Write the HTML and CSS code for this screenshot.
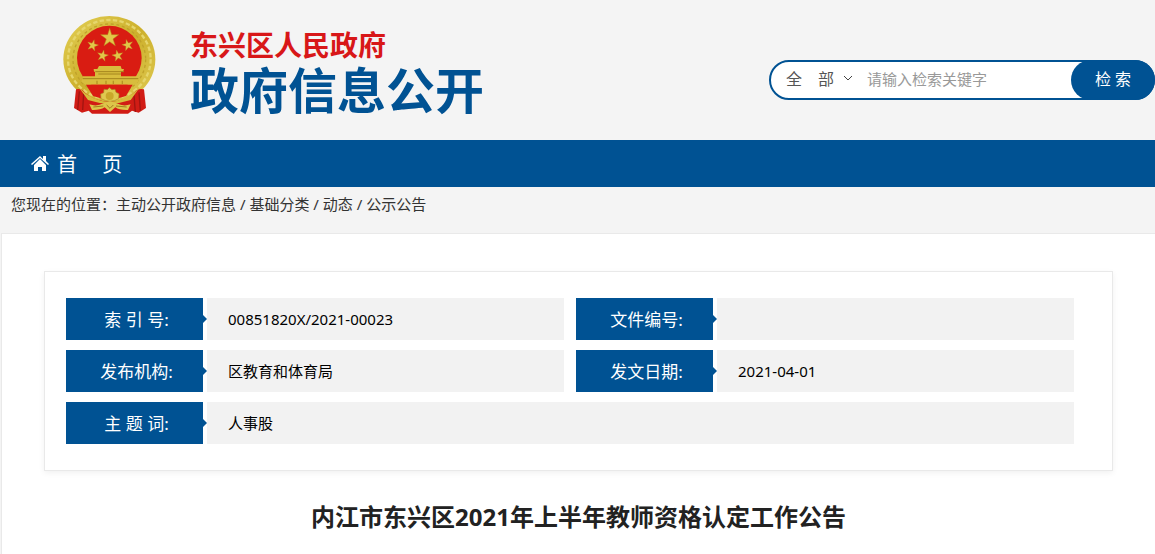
FILE: index.html
```html
<!DOCTYPE html>
<html lang="zh-CN">
<head>
  <meta charset="UTF-8" />
  <meta name="viewport" content="width=device-width, initial-scale=1.0"/>
  <title>内江市东兴区2021年上半年教师资格认定工作公告</title>
  <link rel="stylesheet" href="styles.css">
</head>
<body>

  <header class="header">
    <a class="logo" href="#">
      <svg class="emblem" viewBox="36 24 288 309" aria-hidden="true">
        <defs>
          <linearGradient id="gold" x1="0" y1="0" x2="1" y2="1">
            <stop offset="0" stop-color="#e3d056"/>
            <stop offset="0.5" stop-color="#cdb02c"/>
            <stop offset="1" stop-color="#dfca52"/>
          </linearGradient>
          <path id="star" d="M0-28 6-9 27-9 10 4 17 24 0 12-17 24-10 4-27-9-6-9z"/>
        </defs>
        <!-- wheat ring -->
        <ellipse cx="178" cy="160" rx="138" ry="130" fill="url(#gold)"/>
        <ellipse cx="178" cy="160" rx="124" ry="118" fill="none" stroke="#e6d66c" stroke-width="7" stroke-dasharray="13 7"/>
        <ellipse cx="178" cy="160" rx="109" ry="106" fill="none" stroke="#c0a22a" stroke-width="4" stroke-dasharray="9 8"/>
        <circle cx="178" cy="156" r="97" fill="#d91c12"/>
        <!-- stars -->
        <g fill="#e2c648" stroke="#b78a1b" stroke-width="1.5">
          <use href="#star" transform="translate(179 95)"/>
          <use href="#star" transform="translate(128 118) rotate(15) scale(.62)"/>
          <use href="#star" transform="translate(233 117) rotate(-15) scale(.62)"/>
          <use href="#star" transform="translate(158 149) rotate(12) scale(.62)"/>
          <use href="#star" transform="translate(203 149) rotate(-12) scale(.62)"/>
        </g>
        <!-- gate -->
        <path d="M147 180h65l3 9h7l-3 8h-6v14h50l3 16-14 9H106l-12-9 5-16h36v-14h-3l-1-8h11z" fill="#d8bd3d"/>
        <path d="M136 197h86M98 218h167M145 204h68" stroke="#a4841d" stroke-width="3" fill="none"/>
        <path d="M141 224v10M168 224v10M190 224v10M217 224v10" stroke="#b59424" stroke-width="4"/>
        <!-- ribbons and gear -->
        <path d="M108 236h140l-20 34-50 14-49-14z" fill="#d91c12"/>
        <path d="M78 250q17-4 27 10 28 26 75 27 47-1 72-27 10-14 30-10l6 56-22 14-20-6-12 9H126l-10-9-20 6-24-14z" fill="#d11c15"/>
        <path d="M88 256l-5 56M101 262l-3 50M267 259l4 55M252 268l4 50" stroke="#a11511" stroke-width="4" fill="none"/>
        <path d="M88 246q36 38 90 42 54-4 90-42l-26 36q-64 22-128 0z" fill="#d7bd3c"/>
        <path d="M153 278l-1-14 9-4 1-10 10 1 6-6 8 6 9-1 3 9 9 4-1 15q-25 16-53 0z" fill="#e0c850" stroke="#a98922" stroke-width="2"/>
        <circle cx="179" cy="270" r="12" fill="#c9a72a"/>
        <path d="M118 295q22 8 42-3l20-6 20 6q20 11 42 3l-8 17q-26 1-38-8l-16 14-16-14q-14 9-38 8z" fill="#ddc54a"/>
        <path d="M130 303l30-3M198 300l32 3M170 297l10 10 10-10" stroke="#a17b1b" stroke-width="3" fill="none"/>
      </svg>
      <span class="logo-text">
        <span class="logo-area">东兴区人民政府</span>
        <span class="logo-name">政府信息公开</span>
      </span>
    </a>

    <form class="search" action="#">
      <div class="search-type">
        <select aria-label="检索范围">
          <option>全　部</option>
          <option>标　题</option>
          <option>内　容</option>
        </select>
        <svg class="chevron" viewBox="0 0 10 6" aria-hidden="true"><path d="M1 1l4 4 4-4"/></svg>
      </div>
      <input type="text" aria-label="检索关键字" placeholder="请输入检索关键字">
      <button type="submit">检 索</button>
    </form>
  </header>

  <nav class="nav">
    <a href="#">
      <svg class="home" viewBox="0 0 18 15" aria-hidden="true">
        <path d="M9 0 0 8l1 1 8-7 8 7 1-1-3-3V0h-3v3z"/>
        <path d="M9 3 3 9v6h4v-4h4v4h4V9z"/>
      </svg>
      <span>首　&nbsp;页</span>
    </a>
  </nav>

  <div class="crumbs">您现在的位置：<a href="#">主动公开政府信息</a> / <a href="#">基础分类</a> / <a href="#">动态</a> / <a href="#">公示公告</a></div>

  <main class="main">
    <dl class="info">
      <div class="info-item">
        <dt>索 引 号:</dt>
        <dd>00851820X/2021-00023</dd>
      </div>
      <div class="info-item">
        <dt>文件编号:</dt>
        <dd></dd>
      </div>
      <div class="info-item">
        <dt>发布机构:</dt>
        <dd>区教育和体育局</dd>
      </div>
      <div class="info-item">
        <dt>发文日期:</dt>
        <dd>2021-04-01</dd>
      </div>
      <div class="info-item wide">
        <dt>主 题 词:</dt>
        <dd>人事股</dd>
      </div>
    </dl>

    <h1>内江市东兴区2021年上半年教师资格认定工作公告</h1>
  </main>

</body>
</html>
```
FILE: styles.css
```css
* { box-sizing: border-box; margin: 0; padding: 0; }
body {
  font-family: "Noto Sans", "Noto Sans CJK SC", sans-serif;
  font-size: 15px;
  background: #f4f4f4;
  color: #333;
}
a { color: inherit; text-decoration: none; }

/* Header */
.header {
  display: flex;
  justify-content: space-between;
  align-items: center;
  height: 140px;
  padding-left: 62px;
}
.logo { display: flex; align-items: center; gap: 32px; margin-bottom: 10px; }
.emblem { width: 96px; height: 103px; }
.logo-text { display: flex; flex-direction: column; padding-top: 14px; font-weight: bold; }
.logo-area { font-size: 28px; line-height: 36px; color: #d81718; }
.logo-name { font-size: 49px; line-height: 54px; color: #005293; }

.search {
  display: flex;
  width: 386px;
  height: 40px;
  margin-top: 20px;
  background: #fff;
  border: 2px solid #005293;
  border-radius: 20px;
}
.search-type { position: relative; width: 84px; }
.search select,
.search input,
.search button {
  height: 100%;
  font-family: inherit;
  border: none;
  outline: none;
  background: none;
}
.search select {
  width: 100%;
  padding-left: 15px;
  font-size: 16px;
  color: #555;
  appearance: none;
}
.chevron {
  position: absolute;
  top: 13px;
  right: 2px;
  width: 10px;
  height: 6px;
  fill: none;
  stroke: #444;
  pointer-events: none;
}
.search input { flex: 1; min-width: 0; padding: 0 0 2px 12px; font-size: 15px; }
.search input::placeholder { color: #999; }
.search .search-type select { padding-bottom: 2px; }
.search button {
  width: 84px;
  height: 40px;
  margin: -2px;
  padding-bottom: 4px;
  background: #005293;
  color: #fff;
  font-size: 16px;
  border-radius: 20px;
  cursor: pointer;
}

/* Nav */
.nav { background: #005293; color: #fff; padding-left: 31px; }
.nav a { display: inline-flex; align-items: center; gap: 8px; height: 47px; font-size: 20px; }
.home { width: 18px; height: 15px; fill: #fff; }

.crumbs { padding: 0 11px; height: 46px; line-height: 34px; }

/* Content */
.main {
  margin-left: 1px;
  padding: 37px 42px;
  background: #fff;
  border: 1px solid #e9e9e9;
  border-right: none;
  border-bottom: none;
}
.info {
  display: grid;
  grid-template-columns: 1fr 1fr;
  gap: 10px 12px;
  padding: 26px 38px 26px 21px;
  border: 1px solid #e9e9e9;
  box-shadow: 0 2px 6px rgba(0,0,0,0.06);
}
.info-item { display: flex; gap: 4px; line-height: 42px; }
.info-item.wide { grid-column: 1 / 3; }
.info dt {
  position: relative;
  width: 137px;
  height: 42px;
  padding-left: 4px;
  background: #005293;
  color: #fff;
  font-size: 17px;
  line-height: 44px;
  text-align: center;
}
/* arrow on the label's right edge */
.info dt::after {
  content: "";
  position: absolute;
  top: 17px;
  left: 100%;
  border: 4px solid transparent;
  border-left-color: #005293;
  border-right: none;
}
.info dd { flex: 1; padding-left: 21px; background: #f2f2f2; color: #000; }

h1 {
  margin-top: 28px;
  font-size: 24px;
  line-height: 36px;
  text-align: center;
  color: #222;
}

@media (max-width: 800px) {
  .header { flex-wrap: wrap; height: auto; padding: 15px; }
  .info { grid-template-columns: 1fr; }
  .info-item.wide { grid-column: auto; }
}
```
